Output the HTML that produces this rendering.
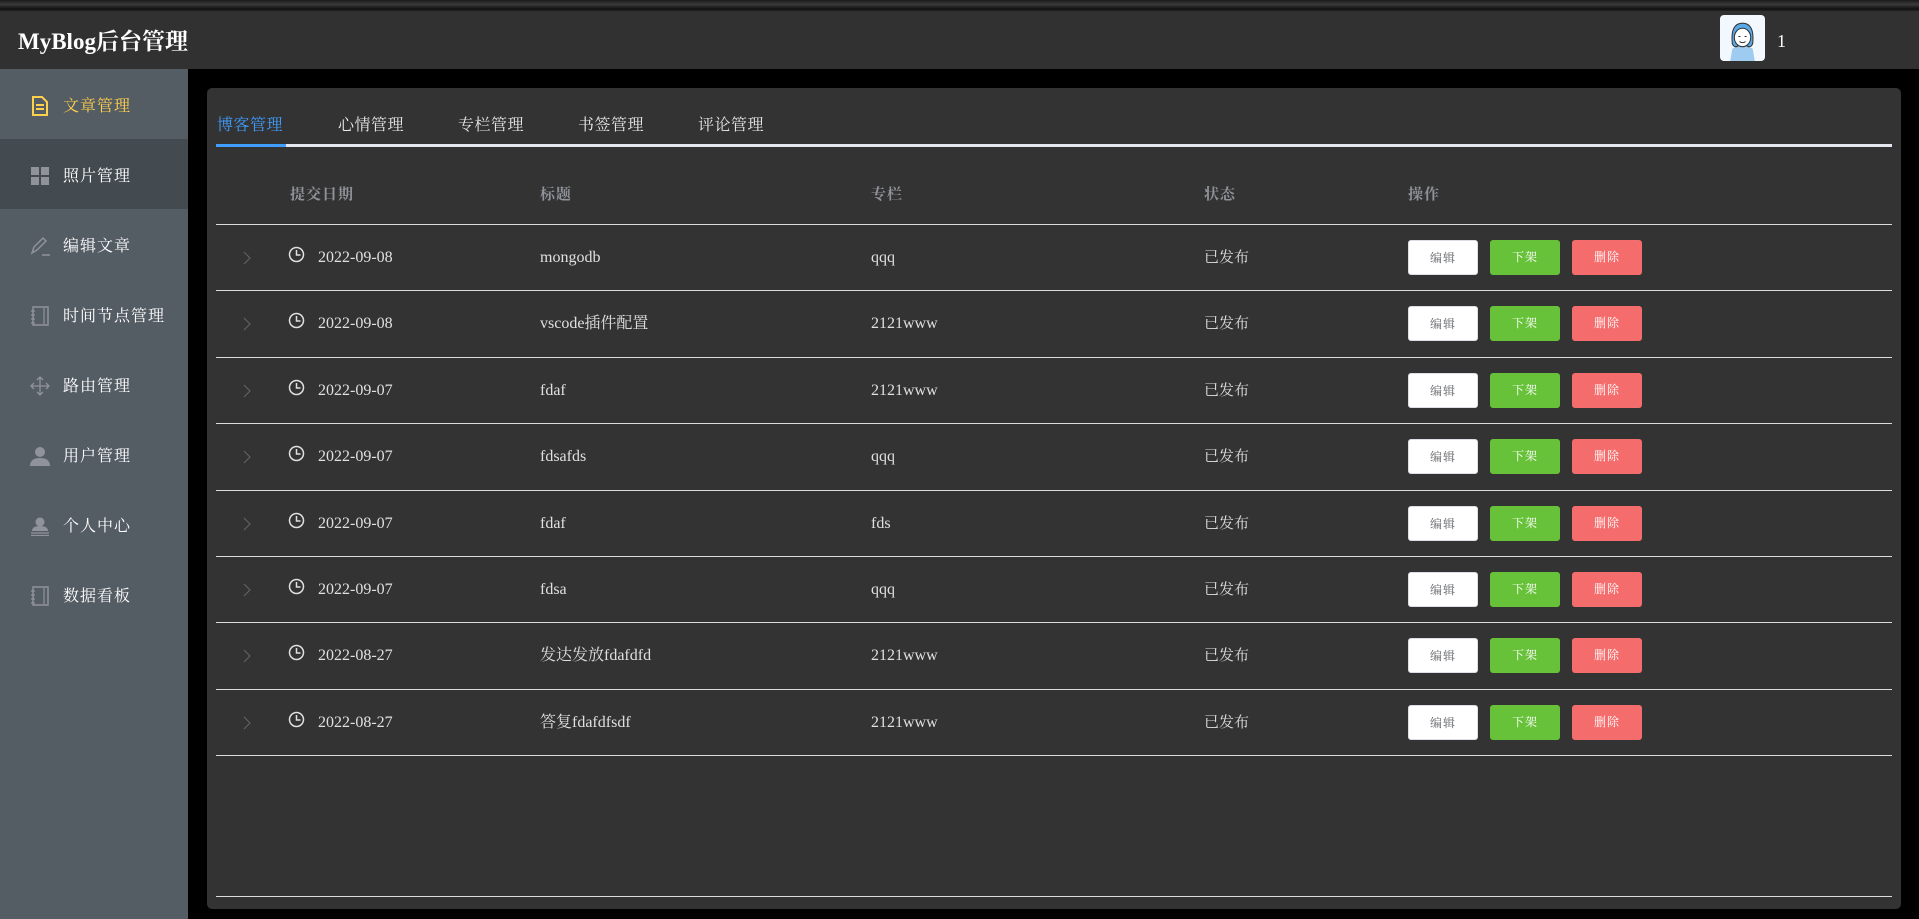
<!DOCTYPE html>
<html><head><meta charset="utf-8"><style>
*{margin:0;padding:0;box-sizing:border-box}
body{width:1919px;height:919px;background:#000;font-family:"Liberation Serif","Noto Serif CJK SC",serif;color:#e8e8e8;position:relative;overflow:hidden}
.top{position:absolute;left:0;top:0;width:1919px;height:11px;background:linear-gradient(180deg,#1a1a1a,#3a3a3a 40%,#111 80%,#222)}
.hdr{position:absolute;left:0;top:11px;width:1919px;height:58px;background:#313131}
.title{position:absolute;left:18px;top:27px;font-size:23px;font-weight:bold;color:#fff;line-height:30px}
.av{position:absolute;left:1720px;top:15px;width:45px;height:46px;border-radius:4px;background:#f3f8ff;overflow:hidden}
.one{position:absolute;left:1777px;top:29px;font-size:18px;color:#fff;line-height:24px}
.side{position:absolute;left:0;top:69px;width:188px;height:850px;background:#545c64}
.it{position:absolute;left:0;width:188px;height:70px}
.it span{position:absolute;left:63px;top:26px;font-size:16px;letter-spacing:1px;color:#fff;line-height:24px}
.it svg{position:absolute;left:30px;top:27px}
.card{position:absolute;left:207px;top:88px;width:1694px;height:821px;background:#333;border-radius:5px}
.tab{position:absolute;top:114px;font-size:16px;color:#e8e8e8;letter-spacing:0.5px;line-height:24px}
.tl{position:absolute;left:216px;top:144px;width:1676px;height:3px;background:#e4e7ed}
.tb{position:absolute;left:216px;top:144px;width:70px;height:3px;background:#409eff}
.th{position:absolute;top:183px;font-size:15px;font-weight:bold;color:#909399;letter-spacing:1px;line-height:24px}
.ln{position:absolute;left:216px;width:1676px;height:1px;background:#dcdcdc}
.c{position:absolute;font-size:16px;color:#e0e0e0;line-height:24px;height:24px}
.btn{position:absolute;width:70px;height:35px;border-radius:3px;font-size:12px;text-align:center;line-height:35px;letter-spacing:1px}
</style></head><body>
<div class="top"></div>
<div class="hdr"></div>
<div class="title">MyBlog后台管理</div>
<div class="av"><svg width="45" height="46" viewBox="0 0 44 45"><path d="M10 45 L12 33 Q22 28 32 33 L34 45Z" fill="#9ecbf0"/><path d="M12 28 Q10 8 22 8 Q34 8 32 28 Q30 33 26 30 L18 30 Q14 33 12 28Z" fill="#5aa9e6" stroke="#333" stroke-width="1"/><ellipse cx="22" cy="22" rx="8" ry="9" fill="#fff" stroke="#333"/><path d="M18 21h2M24 21h2M19 26q3 2 6 0" stroke="#333" fill="none"/></svg></div>
<div class="one">1</div>
<div class="side">
<div class="it" style="top:0"><svg width="20" height="20" viewBox="0 0 20 20"><path d="M3 1h9l5 5v13H3z" fill="none" stroke="#ffd04b" stroke-width="2"/><path d="M6 9h8M6 13h8" stroke="#ffd04b" stroke-width="2"/></svg><span style="color:#ffd04b">文章管理</span></div>
<div class="it" style="top:70px;background:#434a50"><svg width="20" height="20"><rect x="1" y="1" width="8" height="8" fill="#909399"/><rect x="11" y="1" width="8" height="8" fill="#909399"/><rect x="1" y="11" width="8" height="8" fill="#909399"/><rect x="11" y="11" width="8" height="8" fill="#909399"/></svg><span>照片管理</span></div>
<div class="it" style="top:140px"><svg width="20" height="20"><path d="M2 17l2-6 9-9 3 3-9 9z M12 19h8" fill="none" stroke="#909399" stroke-width="1.5"/></svg><span>编辑文章</span></div>
<div class="it" style="top:210px"><svg width="20" height="20"><rect x="3" y="1" width="15" height="18" fill="none" stroke="#909399" stroke-width="1.5"/><path d="M14 1v18M1 5h4M1 9h4M1 13h4M1 17h4" stroke="#909399" stroke-width="1.2"/></svg><span>时间节点管理</span></div>
<div class="it" style="top:280px"><svg width="20" height="20"><path d="M10 1v18M1 10h18M7 4l3-3 3 3M7 16l3 3 3-3M4 7l-3 3 3 3M16 7l3 3-3 3" fill="none" stroke="#909399" stroke-width="1.3"/></svg><span>路由管理</span></div>
<div class="it" style="top:350px"><svg width="20" height="20"><circle cx="10" cy="6" r="5" fill="#909399"/><path d="M0 20q0-8 10-8t10 8z" fill="#909399"/></svg><span>用户管理</span></div>
<div class="it" style="top:420px"><svg width="20" height="20"><circle cx="10" cy="6" r="4.5" fill="#909399"/><path d="M2 15q0-5 8-5t8 5z" fill="#909399"/><path d="M1 17h18M1 19.5h18" stroke="#909399" stroke-width="1.2"/></svg><span>个人中心</span></div>
<div class="it" style="top:490px"><svg width="20" height="20"><rect x="3" y="1" width="15" height="18" fill="none" stroke="#909399" stroke-width="1.5"/><path d="M14 1v18M1 5h4M1 9h4M1 13h4M1 17h4" stroke="#909399" stroke-width="1.2"/></svg><span>数据看板</span></div>
</div>
<div class="card"></div>
<div class="tab" style="left:217px;color:#409eff">博客管理</div>
<div class="tab" style="left:338px">心情管理</div>
<div class="tab" style="left:458px">专栏管理</div>
<div class="tab" style="left:578px">书签管理</div>
<div class="tab" style="left:698px">评论管理</div>
<div class="tl"></div><div class="tb"></div>
<div class="th" style="left:290px">提交日期</div>
<div class="th" style="left:540px">标题</div>
<div class="th" style="left:871px">专栏</div>
<div class="th" style="left:1204px">状态</div>
<div class="th" style="left:1408px">操作</div>
<div class="ln" style="top:224px"></div>
<div id="rows"></div>
<div class="ln" style="top:896px"></div>
<script>
var d=[["2022-09-08","mongodb","qqq"],["2022-09-08","vscode插件配置","2121www"],["2022-09-07","fdaf","2121www"],["2022-09-07","fdsafds","qqq"],["2022-09-07","fdaf","fds"],["2022-09-07","fdsa","qqq"],["2022-08-27","发达发放fdafdfd","2121www"],["2022-08-27","答复fdafdfsdf","2121www"]];
var h="";
d.forEach(function(r,i){var t=224+i*66.4;var m=t+33;
h+='<svg style="position:absolute;left:243px;top:'+(m-6)+'px" width="8" height="14"><path d="M1 1l6 6-6 6" fill="none" stroke="#666" stroke-width="1"/></svg>';
h+='<svg style="position:absolute;left:288px;top:'+(m-11)+'px" width="17" height="17"><circle cx="8.5" cy="8.5" r="7" fill="none" stroke="#e0e0e0" stroke-width="1.5"/><path d="M8.5 4v5h4" fill="none" stroke="#e0e0e0" stroke-width="1.5"/></svg>';
h+='<div class="c" style="left:318px;top:'+(m-11)+'px">'+r[0]+'</div>';
h+='<div class="c" style="left:540px;top:'+(m-11)+'px">'+r[1]+'</div>';
h+='<div class="c" style="left:871px;top:'+(m-11)+'px">'+r[2]+'</div>';
h+='<div class="c" style="left:1204px;top:'+(m-11)+'px;font-size:15px">已发布</div>';
h+='<div class="btn" style="left:1408px;top:'+(m-17)+'px;background:#fff;color:#606266;border:1px solid #dcdfe6">编辑</div>';
h+='<div class="btn" style="left:1490px;top:'+(m-17)+'px;background:#67c23a;color:#fff">下架</div>';
h+='<div class="btn" style="left:1572px;top:'+(m-17)+'px;background:#f56c6c;color:#fff">删除</div>';
h+='<div class="ln" style="top:'+Math.round(t+66.4)+'px"></div>';});
document.getElementById("rows").innerHTML=h;
</script>
</body></html>
